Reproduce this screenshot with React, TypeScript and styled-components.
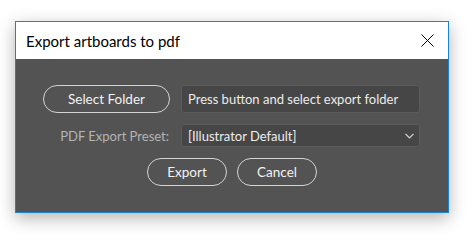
import React from "react";
import styled, { createGlobalStyle } from "styled-components";

const GlobalStyle = createGlobalStyle`
  html, body {
    margin: 0;
    padding: 0;
    background: #ffffff;
  }
  body {
    font-family: "Segoe UI", Lato, "Liberation Sans", sans-serif;
  }
`;

const Page = styled.div`
  padding: 21px 0 30px 15px;
`;

const Window = styled.div`
  width: 434px;
  height: 192px;
  box-sizing: border-box;
  border: 1px solid #1883d7;
  background: #535353;
  box-shadow: 0 5px 16px rgba(0, 0, 0, 0.3);
  display: flex;
  flex-direction: column;
`;

const TitleBar = styled.div`
  height: 37px;
  background: #ffffff;
  display: flex;
  align-items: center;
  justify-content: space-between;
  padding: 0 14px 0 10px;
`;

const Title = styled.span`
  font-size: 15px;
  color: #000000;
`;

const CloseButton = styled.button`
  border: none;
  background: none;
  padding: 0;
  width: 14px;
  height: 14px;
  display: flex;
  align-items: center;
  justify-content: center;
  cursor: pointer;
`;

const Body = styled.div`
  flex: 1;
  display: flex;
  flex-direction: column;
  padding: 26px 27px 0 27px;
`;

const Form = styled.div`
  display: grid;
  grid-template-columns: 127px 239px;
  column-gap: 11px;
  row-gap: 11px;
  align-items: center;
`;

const PillButton = styled.button<{ width?: number }>`
  box-sizing: border-box;
  width: ${({ width }) => (width ? `${width}px` : "100%")};
  height: 28px;
  border: 1px solid #d4d4d4;
  border-radius: 14px;
  background: transparent;
  color: #f2f2f2;
  font-family: inherit;
  font-size: 13.5px;
  padding: 0;
  cursor: pointer;
`;

const Field = styled.div<{ height: number }>`
  box-sizing: border-box;
  height: ${({ height }) => height}px;
  background: #464646;
  border: 1px solid #5b5b5b;
  border-radius: 3px;
  color: #ececec;
  font-size: 13px;
  white-space: nowrap;
  display: flex;
  align-items: center;
  justify-content: space-between;
  padding: 0 5px 0 6px;
`;

const Label = styled.span`
  text-align: right;
  color: #b4b4b4;
  font-size: 13px;
  padding-right: 1px;
`;

const Actions = styled.div`
  display: flex;
  justify-content: center;
  gap: 10px;
  margin-top: 11px;
`;

const App: React.FC = () => {
  return (
    <>
      <GlobalStyle />
      <Page>
        <Window>
          <TitleBar>
            <Title>Export artboards to pdf</Title>
            <CloseButton aria-label="Close">
              <svg width="13" height="13" viewBox="0 0 13 13">
                <path d="M0.5 0.5 L12.5 12.5 M12.5 0.5 L0.5 12.5" stroke="#000" strokeWidth="1" />
              </svg>
            </CloseButton>
          </TitleBar>
          <Body>
            <Form>
              <PillButton>Select Folder</PillButton>
              <Field height={28}>Press button and select export folder</Field>
              <Label>PDF Export Preset:</Label>
              <Field height={23}>
                <span>[Illustrator Default]</span>
                <svg width="9" height="6" viewBox="0 0 9 6">
                  <path d="M0.5 0.8 L4.5 4.8 L8.5 0.8" fill="none" stroke="#d8d8d8" strokeWidth="1.2" />
                </svg>
              </Field>
            </Form>
            <Actions>
              <PillButton width={80}>Export</PillButton>
              <PillButton width={80}>Cancel</PillButton>
            </Actions>
          </Body>
        </Window>
      </Page>
    </>
  );
};

export default App;
